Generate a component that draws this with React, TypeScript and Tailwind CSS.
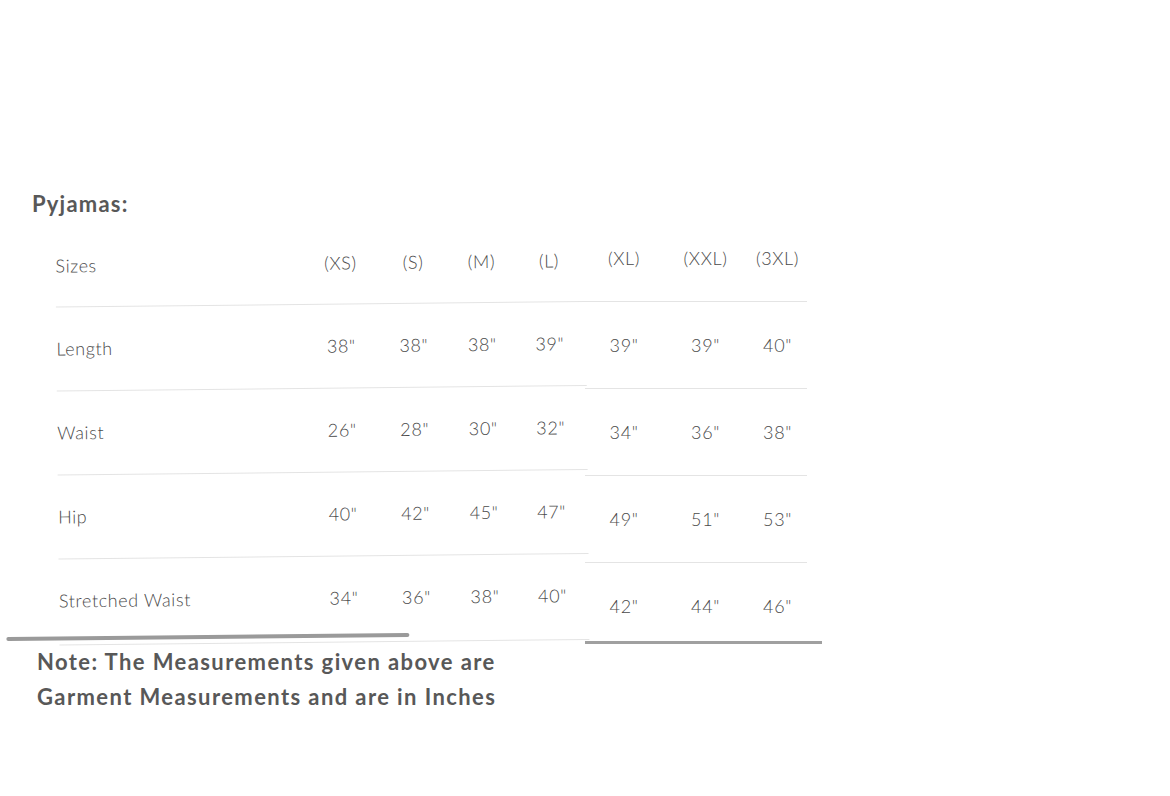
import React from "react";

const leftSizes = ["(XS)", "(S)", "(M)", "(L)"];
const rightSizes = ["(XL)", "(XXL)", "(3XL)"];

const rows = [
  { label: "Length", left: ["38\"", "38\"", "38\"", "39\""], right: ["39\"", "39\"", "40\""] },
  { label: "Waist", left: ["26\"", "28\"", "30\"", "32\""], right: ["34\"", "36\"", "38\""] },
  { label: "Hip", left: ["40\"", "42\"", "45\"", "47\""], right: ["49\"", "51\"", "53\""] },
  { label: "Stretched Waist", left: ["34\"", "36\"", "38\"", "40\""], right: ["42\"", "44\"", "46\""] },
];

const leftGrid = "grid grid-cols-[250px_70px_75px_62px_73px] items-center";
const rightGrid = "grid grid-cols-[78px_85px_59px] items-center";

const App: React.FC = () => {
  return (
    <div
      className="w-[1170px] h-[796px] bg-white text-[#4a4a4a] overflow-hidden"
      style={{ fontFamily: "Lato, 'Open Sans', sans-serif" }}
    >
      <h1 className="pt-[190px] pl-[32px] text-[22px] leading-[28px] font-bold tracking-[1.2px] text-[#585858]">
        Pyjamas:
      </h1>

      <div className="flex items-start -mt-[3px] font-light">
        {/* left half of the chart, slightly tilted like the scan */}
        <div className="w-[585px] mt-[4px] -rotate-[0.6deg] origin-top-right">
          <div className={`${leftGrid} ml-[55px] h-[83px] border-b border-[#e4e4e4] text-[18px] tracking-[0.6px]`}>
            <span>Sizes</span>
            {leftSizes.map((s) => (
              <span key={s} className="text-center">{s}</span>
            ))}
          </div>
          {rows.map((row, i) => (
            <div
              key={row.label}
              className={`${leftGrid} ml-[55px] text-[18px] tracking-[0.6px] ${
                i === rows.length - 1 ? "h-[77px] pt-[5px]" : "h-[84px] border-b border-[#e4e4e4]"
              }`}
            >
              <span>{row.label}</span>
              {row.left.map((v, j) => (
                <span key={j} className="text-center">{v}</span>
              ))}
            </div>
          ))}
          <div className="ml-[2px] w-[403px] h-[4px] rounded-full bg-[#9a9a9a]" />
          <div className="ml-[55px] mt-[4px] h-px bg-[#e4e4e4]" />
        </div>

        {/* right half of the chart */}
        <div className="w-[237px] mt-[1px]">
          <div className={`${rightGrid} w-[222px] h-[86px] border-b border-[#e4e4e4] text-[18px] tracking-[0.6px]`}>
            {rightSizes.map((s) => (
              <span key={s} className="text-center">{s}</span>
            ))}
          </div>
          {rows.map((row, i) => (
            <div
              key={row.label}
              className={`${rightGrid} w-[222px] text-[18px] tracking-[0.6px] ${
                i === rows.length - 1 ? "h-[78px] pt-[8px]" : "h-[87px] border-b border-[#e4e4e4]"
              }`}
            >
              {row.right.map((v, j) => (
                <span key={j} className="text-center">{v}</span>
              ))}
            </div>
          ))}
          <div className="h-[3px] bg-[#a0a0a0]" />
        </div>
      </div>

      <div className="pl-[37px] text-[22px] leading-[35px] font-bold tracking-[1.4px] text-[#585858]">
        <p>Note: The Measurements given above are</p>
        <p>Garment Measurements and are in Inches</p>
      </div>
    </div>
  );
};

export default App;
